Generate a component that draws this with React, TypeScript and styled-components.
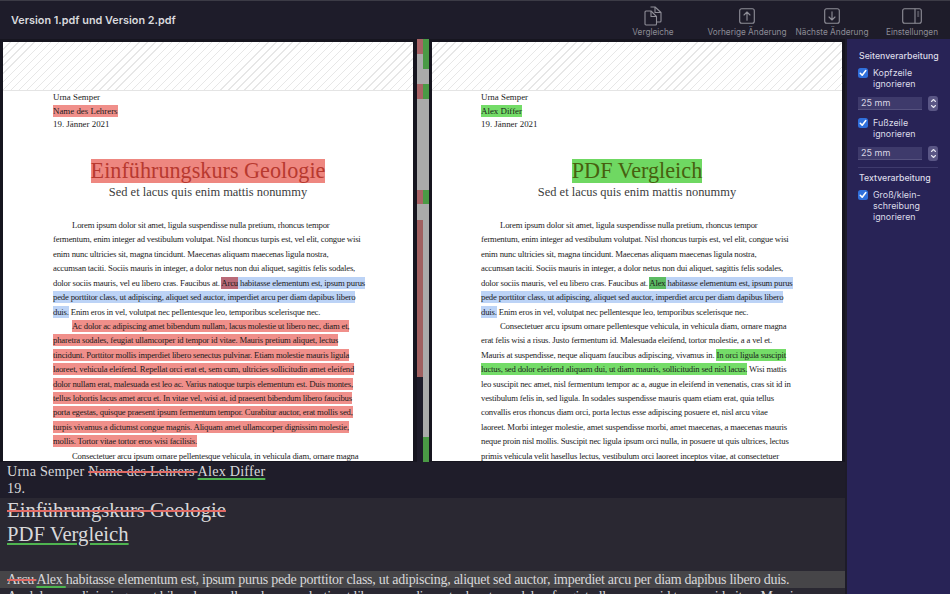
import styled, { createGlobalStyle } from "styled-components";

const GlobalStyle = createGlobalStyle`
  html, body {
    margin: 0;
    padding: 0;
    width: 950px;
    height: 594px;
    overflow: hidden;
    background: #1d1b29;
  }
`;

const Shell = styled.div`
  width: 950px;
  height: 594px;
  display: flex;
  flex-direction: column;
  overflow: hidden;
  font-family: "Inter", "Liberation Sans", sans-serif;
`;

const TitleBar = styled.header`
  height: 39px;
  flex: none;
  box-sizing: border-box;
  border-top: 1px solid #3c3b46;
  background: #1e1c2a;
  display: flex;
  align-items: flex-start;
  padding: 0 0 0 11px;
`;

const WindowTitle = styled.h1`
  margin: 12px 0 0;
  flex: 1;
  font-size: 10.85px;
  line-height: 14px;
  font-weight: 600;
  color: #d9d9dd;
`;

const ToolButton = styled.div<{ $w: number }>`
  width: ${p => p.$w}px;
  padding-top: 5px;
  display: flex;
  flex-direction: column;
  align-items: center;
  gap: 1px;
  color: #8c8b95;
  font-size: 8.25px;
  line-height: 11px;
  white-space: nowrap;
`;

const IconSlot = styled.div`
  height: 20px;
  display: flex;
  align-items: center;
  justify-content: center;
`;

const Body = styled.div`
  flex: 1;
  display: flex;
  min-height: 0;
`;

const MainArea = styled.main`
  width: 845px;
  flex: none;
  display: flex;
  flex-direction: column;
`;

const CompareRow = styled.div`
  height: 423px;
  flex: none;
  display: flex;
  background: #16151f;
`;

const Page = styled.section`
  width: 410px;
  margin: 3px 0 1px 3px;
  background: #fff;
  overflow: hidden;
  font-family: "Liberation Serif", serif;
  color: #1c1c1c;
`;

const Hatch = styled.div`
  height: 49px;
  box-sizing: border-box;
  border-bottom: 1px solid #e4e4e4;
  background: repeating-linear-gradient(
    135deg,
    #ffffff 0,
    #ffffff 4.8px,
    #e7e7e7 4.8px,
    #e7e7e7 5.7px
  );
`;

const PageText = styled.div<{ $left: number }>`
  padding-left: ${p => p.$left}px;
`;

const HeadLine = styled.div`
  font-size: 8.9px;
  line-height: 13.7px;
  height: 13.7px;
  white-space: nowrap;
`;

const Title = styled.div`
  margin: 27px 0 0;
  display: flex;
  justify-content: center;
  font-size: 22.2px;
  line-height: 24px;
`;

const Subtitle = styled.div`
  margin: 2px 0 18px;
  text-align: center;
  font-size: 12.45px;
  line-height: 15px;
  color: #3c3c3c;
`;

const TextLine = styled.div<{ $indent?: boolean }>`
  font-size: 8.7px;
  letter-spacing: -0.18px;
  line-height: 14.42px;
  height: 14.42px;
  white-space: nowrap;
  padding-left: ${p => (p.$indent ? 19 : 0)}px;
`;

const Mark = styled.span<{ $kind: "red" | "green" | "blue" | "darkred" | "darkgreen" }>`
  padding: 1px 0;
  background: ${p =>
    ({
      red: "#f08f8a",
      green: "#74dc68",
      blue: "#bcd3f6",
      darkred: "#b96a78",
      darkgreen: "#5cbb63",
    })[p.$kind]};
`;

const TitleMark = styled.span<{ $kind: "red" | "green" }>`
  background: ${p => (p.$kind === "red" ? "#ee8780" : "#6fd862")};
  color: ${p => (p.$kind === "red" ? "#b8392f" : "#47600f")};
`;

const MiniMap = styled.div`
  width: 12px;
  flex: none;
  margin-left: 4px;
  display: flex;
`;

const MiniColumn = styled.div`
  flex: 1;
  display: flex;
  flex-direction: column;
`;

const MiniBlock = styled.div<{ $h: number; $c: string }>`
  height: ${p => p.$h}px;
  background: ${p => p.$c};
`;

const DiffPanel = styled.div`
  flex: 1;
  display: flex;
  flex-direction: column;
  overflow: hidden;
  font-family: "Liberation Serif", serif;
  color: #d8d8da;
  background: #2a2832;
`;

const DiffBlock = styled.div<{ $h: number; $bg: string; $top?: number }>`
  height: ${p => p.$h}px;
  flex: none;
  box-sizing: border-box;
  background: ${p => p.$bg};
  padding: ${p => p.$top ?? 0}px 0 0 7px;
  white-space: nowrap;
  overflow: hidden;
`;

const DiffLine = styled.div`
  font-size: 14.2px;
  letter-spacing: 0.2px;
  line-height: 17px;
`;

const DiffBodyLine = styled.div`
  font-size: 14px;
  letter-spacing: -0.27px;
  line-height: 17px;
`;

const DiffTitle = styled.div`
  font-size: 20.7px;
  line-height: 24px;
`;

const Del = styled.span`
  text-decoration: line-through 2px #e06a66;
`;

const Ins = styled.span`
  text-decoration: underline 2px #4fb450;
  text-underline-offset: 2px;
`;

const Sidebar = styled.aside`
  flex: 1;
  margin-left: 2px;
  background: #282356;
  padding: 12px 0 0 11px;
  color: #dcdbe8;
  font-size: 8.9px;
  line-height: 11px;
`;

const SectionTitle = styled.div`
  margin: 0 0 5px 1px;
  font-size: 8.75px;
  font-weight: 500;
  white-space: nowrap;
`;

const CheckRow = styled.label`
  display: flex;
  gap: 5px;
  margin-bottom: 7px;
`;

const CheckBox = styled.span`
  width: 10px;
  height: 10px;
  flex: none;
  margin-top: 1px;
  border-radius: 2.5px;
  background: #2f6fdb;
  display: flex;
  align-items: center;
  justify-content: center;
`;

const StepRow = styled.div`
  display: flex;
  align-items: center;
  gap: 6px;
  margin-bottom: 6px;
`;

const StepField = styled.div`
  width: 64px;
  height: 13px;
  box-sizing: border-box;
  padding-left: 3px;
  background: #3e3a6b;
  border-bottom: 1px solid #56527f;
  font-size: 9px;
  line-height: 12px;
  color: #d8d7e4;
`;

const Stepper = styled.div`
  width: 10px;
  height: 15px;
  border-radius: 3px;
  background: #5a5685;
  display: flex;
  align-items: center;
  justify-content: center;
`;

const Divider = styled.div`
  width: 80px;
  height: 1px;
  background: #3f3b6d;
  margin: 0 0 5px;
`;

const CompareIcon = () => (
  <svg width="18" height="20" viewBox="0 0 18 20" fill="none" stroke="#8f8e98" strokeWidth="1.1" strokeLinejoin="round">
    <path d="M6.5 1h4.5l6 5.5V15a1 1 0 0 1-1 1H12.5" />
    <path d="M11 1v5.5h6" />
    <path d="M2 5h5l5.5 5.5V18a1 1 0 0 1-1 1H2a1 1 0 0 1-1-1V6a1 1 0 0 1 1-1z" fill="#1e1c2a" />
    <path d="M7 5v5.5h5.5" />
  </svg>
);

const ArrowBoxIcon = ({ down }: { down?: boolean }) => (
  <svg width="16" height="16" viewBox="0 0 16 16" fill="none" stroke="#8f8e98" strokeWidth="1.1" strokeLinecap="round" strokeLinejoin="round">
    <rect x="0.7" y="0.7" width="14.6" height="14.6" rx="2" />
    {down ? <path d="M8 3.8v8M5 9l3 3 3-3" /> : <path d="M8 12.2v-8M5 7l3-3 3 3" />}
  </svg>
);

const SidebarIcon = () => (
  <svg width="20" height="16" viewBox="0 0 20 16" fill="none" stroke="#8f8e98" strokeWidth="1.1">
    <rect x="0.7" y="0.7" width="18.6" height="14.6" rx="2" />
    <path d="M13 0.7v14.6" />
    <path d="M15.2 4h2M15.2 6h2M15.2 8h2" strokeWidth="0.9" />
  </svg>
);

const CheckMark = () => (
  <svg width="8" height="8" viewBox="0 0 8 8" fill="none" stroke="#fff" strokeWidth="1.6" strokeLinecap="round" strokeLinejoin="round">
    <path d="M1.3 4.3 3.2 6.2 6.8 1.6" />
  </svg>
);

const StepperArrows = () => (
  <svg width="7" height="13" viewBox="0 0 7 13" fill="none" stroke="#e4e3ee" strokeWidth="1.1" strokeLinecap="round" strokeLinejoin="round">
    <path d="M1.5 4.5 3.5 2.5 5.5 4.5M1.5 8.5 3.5 10.5 5.5 8.5" />
  </svg>
);

const MiniGrey = "#aaaaaa";
const MiniRed = "#a86466";
const MiniRedDim = "#a06060";
const MiniGreen = "#4a9a45";

const miniLeft: [number, string][] = [
  [15, MiniRed], [30, MiniGrey], [15, MiniRed], [91, MiniGrey], [14, MiniRed],
  [16, MiniGrey], [157, MiniRedDim], [85, "#1e1c2a"],
];
const miniRight: [number, string][] = [
  [30, MiniGreen], [15, MiniGrey], [15, MiniGreen], [91, MiniGrey], [14, MiniGreen],
  [233, MiniGrey], [25, MiniGreen],
];

const leftRedLines: [string, boolean?][] = [
  ["Ac dolor ac adipiscing amet bibendum nullam, lacus molestie ut libero nec, diam et,", true],
  ["pharetra sodales, feugiat ullamcorper id tempor id vitae. Mauris pretium aliquet, lectus"],
  ["tincidunt. Porttitor mollis imperdiet libero senectus pulvinar. Etiam molestie mauris ligula"],
  ["laoreet, vehicula eleifend. Repellat orci erat et, sem cum, ultricies sollicitudin amet eleifend"],
  ["dolor nullam erat, malesuada est leo ac. Varius natoque turpis elementum est. Duis montes,"],
  ["tellus lobortis lacus amet arcu et. In vitae vel, wisi at, id praesent bibendum libero faucibus"],
  ["porta egestas, quisque praesent ipsum fermentum tempor. Curabitur auctor, erat mollis sed,"],
  ["turpis vivamus a dictumst congue magnis. Aliquam amet ullamcorper dignissim molestie,"],
  ["mollis. Tortor vitae tortor eros wisi facilisis."],
];

const rightTailLines = [
  "leo suscipit nec amet, nisl fermentum tempor ac a, augue in eleifend in venenatis, cras sit id in",
  "vestibulum felis in, sed ligula. In sodales suspendisse mauris quam etiam erat, quia tellus",
  "convallis eros rhoncus diam orci, porta lectus esse adipiscing posuere et, nisl arcu vitae",
  "laoreet. Morbi integer molestie, amet suspendisse morbi, amet maecenas, a maecenas mauris",
  "neque proin nisl mollis. Suscipit nec ligula ipsum orci nulla, in posuere ut quis ultrices, lectus",
  "primis vehicula velit hasellus lectus, vestibulum orci laoreet inceptos vitae, at consectetuer",
];

function CommonIntro({ changed, changedKind }: { changed: string; changedKind: "darkred" | "darkgreen" }) {
  return (
    <>
      <TextLine $indent>Lorem ipsum dolor sit amet, ligula suspendisse nulla pretium, rhoncus tempor</TextLine>
      <TextLine>fermentum, enim integer ad vestibulum volutpat. Nisl rhoncus turpis est, vel elit, congue wisi</TextLine>
      <TextLine>enim nunc ultricies sit, magna tincidunt. Maecenas aliquam maecenas ligula nostra,</TextLine>
      <TextLine>accumsan taciti. Sociis mauris in integer, a dolor netus non dui aliquet, sagittis felis sodales,</TextLine>
      <TextLine>
        dolor sociis mauris, vel eu libero cras. Faucibus at. <Mark $kind={changedKind}>{changed}</Mark>
        <Mark $kind="blue"> habitasse elementum est, ipsum purus</Mark>
      </TextLine>
      <TextLine>
        <Mark $kind="blue">pede porttitor class, ut adipiscing, aliquet sed auctor, imperdiet arcu per diam dapibus libero</Mark>
      </TextLine>
      <TextLine>
        <Mark $kind="blue">duis.</Mark> Enim eros in vel, volutpat nec pellentesque leo, temporibus scelerisque nec.
      </TextLine>
    </>
  );
}

export default function App() {
  return (
    <Shell>
      <GlobalStyle />
      <TitleBar>
        <WindowTitle>Version 1.pdf und Version 2.pdf</WindowTitle>
        <ToolButton $w={102}>
          <IconSlot>
            <CompareIcon />
          </IconSlot>
          Vergleiche
        </ToolButton>
        <ToolButton $w={86}>
          <IconSlot>
            <ArrowBoxIcon />
          </IconSlot>
          Vorherige Änderung
        </ToolButton>
        <ToolButton $w={84}>
          <IconSlot>
            <ArrowBoxIcon down />
          </IconSlot>
          Nächste Änderung
        </ToolButton>
        <ToolButton $w={76}>
          <IconSlot>
            <SidebarIcon />
          </IconSlot>
          Einstellungen
        </ToolButton>
      </TitleBar>
      <Body>
        <MainArea>
          <CompareRow>
            <Page>
              <Hatch />
              <PageText $left={50}>
                <HeadLine>Urna Semper</HeadLine>
                <HeadLine>
                  <Mark $kind="red">Name des Lehrers</Mark>
                </HeadLine>
                <HeadLine>19. Jänner 2021</HeadLine>
              </PageText>
              <Title>
                <TitleMark $kind="red">Einführungskurs Geologie</TitleMark>
              </Title>
              <Subtitle>Sed et lacus quis enim mattis nonummy</Subtitle>
              <PageText $left={50}>
                <CommonIntro changed="Arcu" changedKind="darkred" />
                {leftRedLines.map(([line, indent], i) => (
                  <TextLine key={i} $indent={indent}>
                    <Mark $kind="red">{line}</Mark>
                  </TextLine>
                ))}
                <TextLine $indent>Consectetuer arcu ipsum ornare pellentesque vehicula, in vehicula diam, ornare magna</TextLine>
              </PageText>
            </Page>
            <MiniMap>
              <MiniColumn>
                {miniLeft.map(([h, c], i) => (
                  <MiniBlock key={i} $h={h} $c={c} />
                ))}
              </MiniColumn>
              <MiniColumn>
                {miniRight.map(([h, c], i) => (
                  <MiniBlock key={i} $h={h} $c={c} />
                ))}
              </MiniColumn>
            </MiniMap>
            <Page>
              <Hatch />
              <PageText $left={49}>
                <HeadLine>Urna Semper</HeadLine>
                <HeadLine>
                  <Mark $kind="green">Alex Differ</Mark>
                </HeadLine>
                <HeadLine>19. Jänner 2021</HeadLine>
              </PageText>
              <Title>
                <TitleMark $kind="green">PDF Vergleich</TitleMark>
              </Title>
              <Subtitle>Sed et lacus quis enim mattis nonummy</Subtitle>
              <PageText $left={49}>
                <CommonIntro changed="Alex" changedKind="darkgreen" />
                <TextLine $indent>Consectetuer arcu ipsum ornare pellentesque vehicula, in vehicula diam, ornare magna</TextLine>
                <TextLine>erat felis wisi a risus. Justo fermentum id. Malesuada eleifend, tortor molestie, a a vel et.</TextLine>
                <TextLine>
                  Mauris at suspendisse, neque aliquam faucibus adipiscing, vivamus in. <Mark $kind="green">In orci ligula suscipit</Mark>
                </TextLine>
                <TextLine>
                  <Mark $kind="green">luctus, sed dolor eleifend aliquam dui, ut diam mauris, sollicitudin sed nisl lacus.</Mark> Wisi mattis
                </TextLine>
                {rightTailLines.map((line, i) => (
                  <TextLine key={i}>{line}</TextLine>
                ))}
              </PageText>
            </Page>
          </CompareRow>
          <DiffPanel>
            <DiffBlock $h={36} $bg="#1f1d2a" $top={1}>
              <DiffLine>
                Urna Semper <Del>Name des Lehrers </Del>
                <Ins>Alex Differ</Ins>
              </DiffLine>
              <DiffLine>19.</DiffLine>
            </DiffBlock>
            <DiffBlock $h={73} $bg="#2a2832">
              <DiffTitle>
                <Del>Einführungskurs Geologie</Del>
              </DiffTitle>
              <DiffTitle>
                <Ins>PDF Vergleich</Ins>
              </DiffTitle>
            </DiffBlock>
            <DiffBlock $h={17} $bg="#464548">
              <DiffBodyLine>
                <Del>Arcu </Del>
                <Ins>Alex </Ins>
                habitasse elementum est, ipsum purus pede porttitor class, ut adipiscing, aliquet sed auctor, imperdiet arcu per diam dapibus libero duis.
              </DiffBodyLine>
            </DiffBlock>
            <DiffBlock $h={17} $bg="#2a2832">
              <DiffBodyLine>
                Ac dolor ac adipiscing amet bibendum nullam, lacus molestie ut libero nec, diam et, pharetra sodales, feugiat ullamcorper id tempor id vitae. Mauris
              </DiffBodyLine>
            </DiffBlock>
          </DiffPanel>
        </MainArea>
        <Sidebar>
          <SectionTitle>Seitenverarbeitung</SectionTitle>
          <CheckRow>
            <CheckBox>
              <CheckMark />
            </CheckBox>
            <span>
              Kopfzeile
              <br />
              ignorieren
            </span>
          </CheckRow>
          <StepRow>
            <StepField>25 mm</StepField>
            <Stepper>
              <StepperArrows />
            </Stepper>
          </StepRow>
          <CheckRow>
            <CheckBox>
              <CheckMark />
            </CheckBox>
            <span>
              Fußzeile
              <br />
              ignorieren
            </span>
          </CheckRow>
          <StepRow>
            <StepField>25 mm</StepField>
            <Stepper>
              <StepperArrows />
            </Stepper>
          </StepRow>
          <Divider />
          <SectionTitle>Textverarbeitung</SectionTitle>
          <CheckRow>
            <CheckBox>
              <CheckMark />
            </CheckBox>
            <span>
              Groß/klein-
              <br />
              schreibung
              <br />
              ignorieren
            </span>
          </CheckRow>
        </Sidebar>
      </Body>
    </Shell>
  );
}
